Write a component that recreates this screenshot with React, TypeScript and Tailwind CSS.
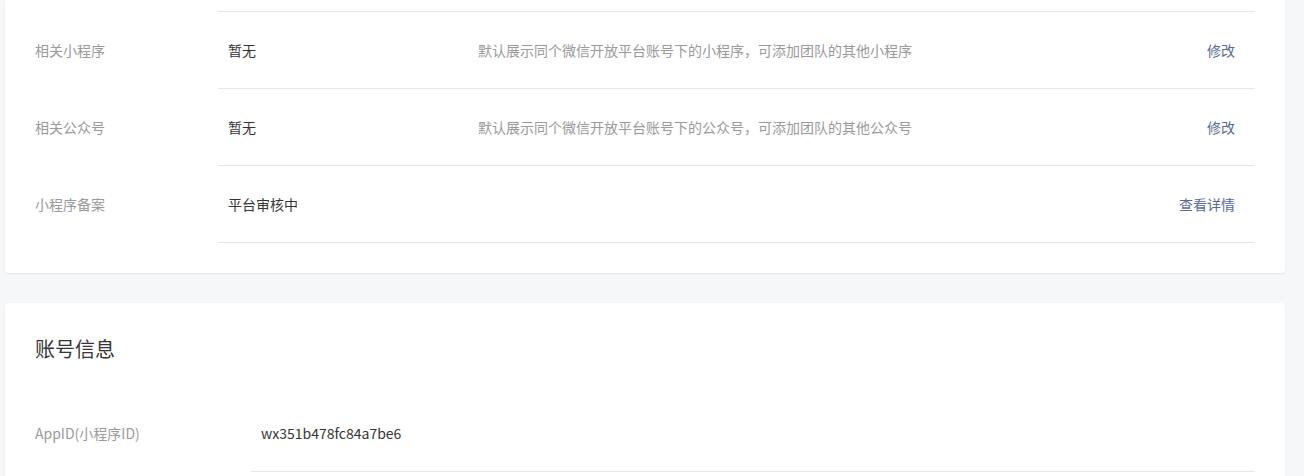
const font = { fontFamily: '"Noto Sans CJK SC", "Noto Sans", sans-serif' };

type Row = { label: string; value: string; desc?: string; action?: string };

const relatedRows: Row[] = [
  {
    label: '相关小程序',
    value: '暂无',
    desc: '默认展示同个微信开放平台账号下的小程序，可添加团队的其他小程序',
    action: '修改',
  },
  {
    label: '相关公众号',
    value: '暂无',
    desc: '默认展示同个微信开放平台账号下的公众号，可添加团队的其他公众号',
    action: '修改',
  },
  { label: '小程序备案', value: '平台审核中', action: '查看详情' },
];

function InfoRow({ row }: { row: Row }) {
  return (
    <div className="flex">
      <div className="w-[183px] shrink-0 flex items-center text-[14px] text-[#9a9a9a]">{row.label}</div>
      <div className="flex-1 h-[77px] flex items-center border-b border-[#e7e7e7] pl-[10px] pr-[20px]">
        <div className="w-[250px] shrink-0 text-[14px] text-[#353535]">{row.value}</div>
        <div className="flex-1 text-[14px] text-[#9a9a9a]">{row.desc}</div>
        {row.action && <a className="text-[14px] text-[#576b95] cursor-pointer">{row.action}</a>}
      </div>
    </div>
  );
}

export default function App() {
  return (
    <div className="min-h-screen bg-[#f6f7f9] pl-[5px] pr-[19px]" style={font}>
      <div className="bg-white rounded-b-[4px] shadow-[0_1px_2px_rgba(0,0,0,0.08)] px-[30px] pb-[30px]">
        <div className="flex">
          <div className="w-[183px] shrink-0" />
          <div className="flex-1 h-[12px] border-b border-[#e7e7e7]" />
        </div>
        {relatedRows.map((r) => (
          <InfoRow key={r.label} row={r} />
        ))}
      </div>

      <div className="mt-[30px] bg-white rounded-[4px] shadow-[0_1px_2px_rgba(0,0,0,0.08)] px-[30px] pt-[32px] pb-[30px]">
        <h2 className="text-[20px] leading-[28px] font-normal text-[#353535]">账号信息</h2>
        <div className="flex mt-[32px]">
          <div className="w-[216px] shrink-0 flex items-center text-[14px] text-[#9a9a9a]">AppID(小程序ID)</div>
          <div className="flex-1 h-[77px] flex items-center border-b border-[#e7e7e7] pl-[10px] text-[14px] text-[#353535]">
            wx351b478fc84a7be6
          </div>
        </div>
      </div>
    </div>
  );
}
